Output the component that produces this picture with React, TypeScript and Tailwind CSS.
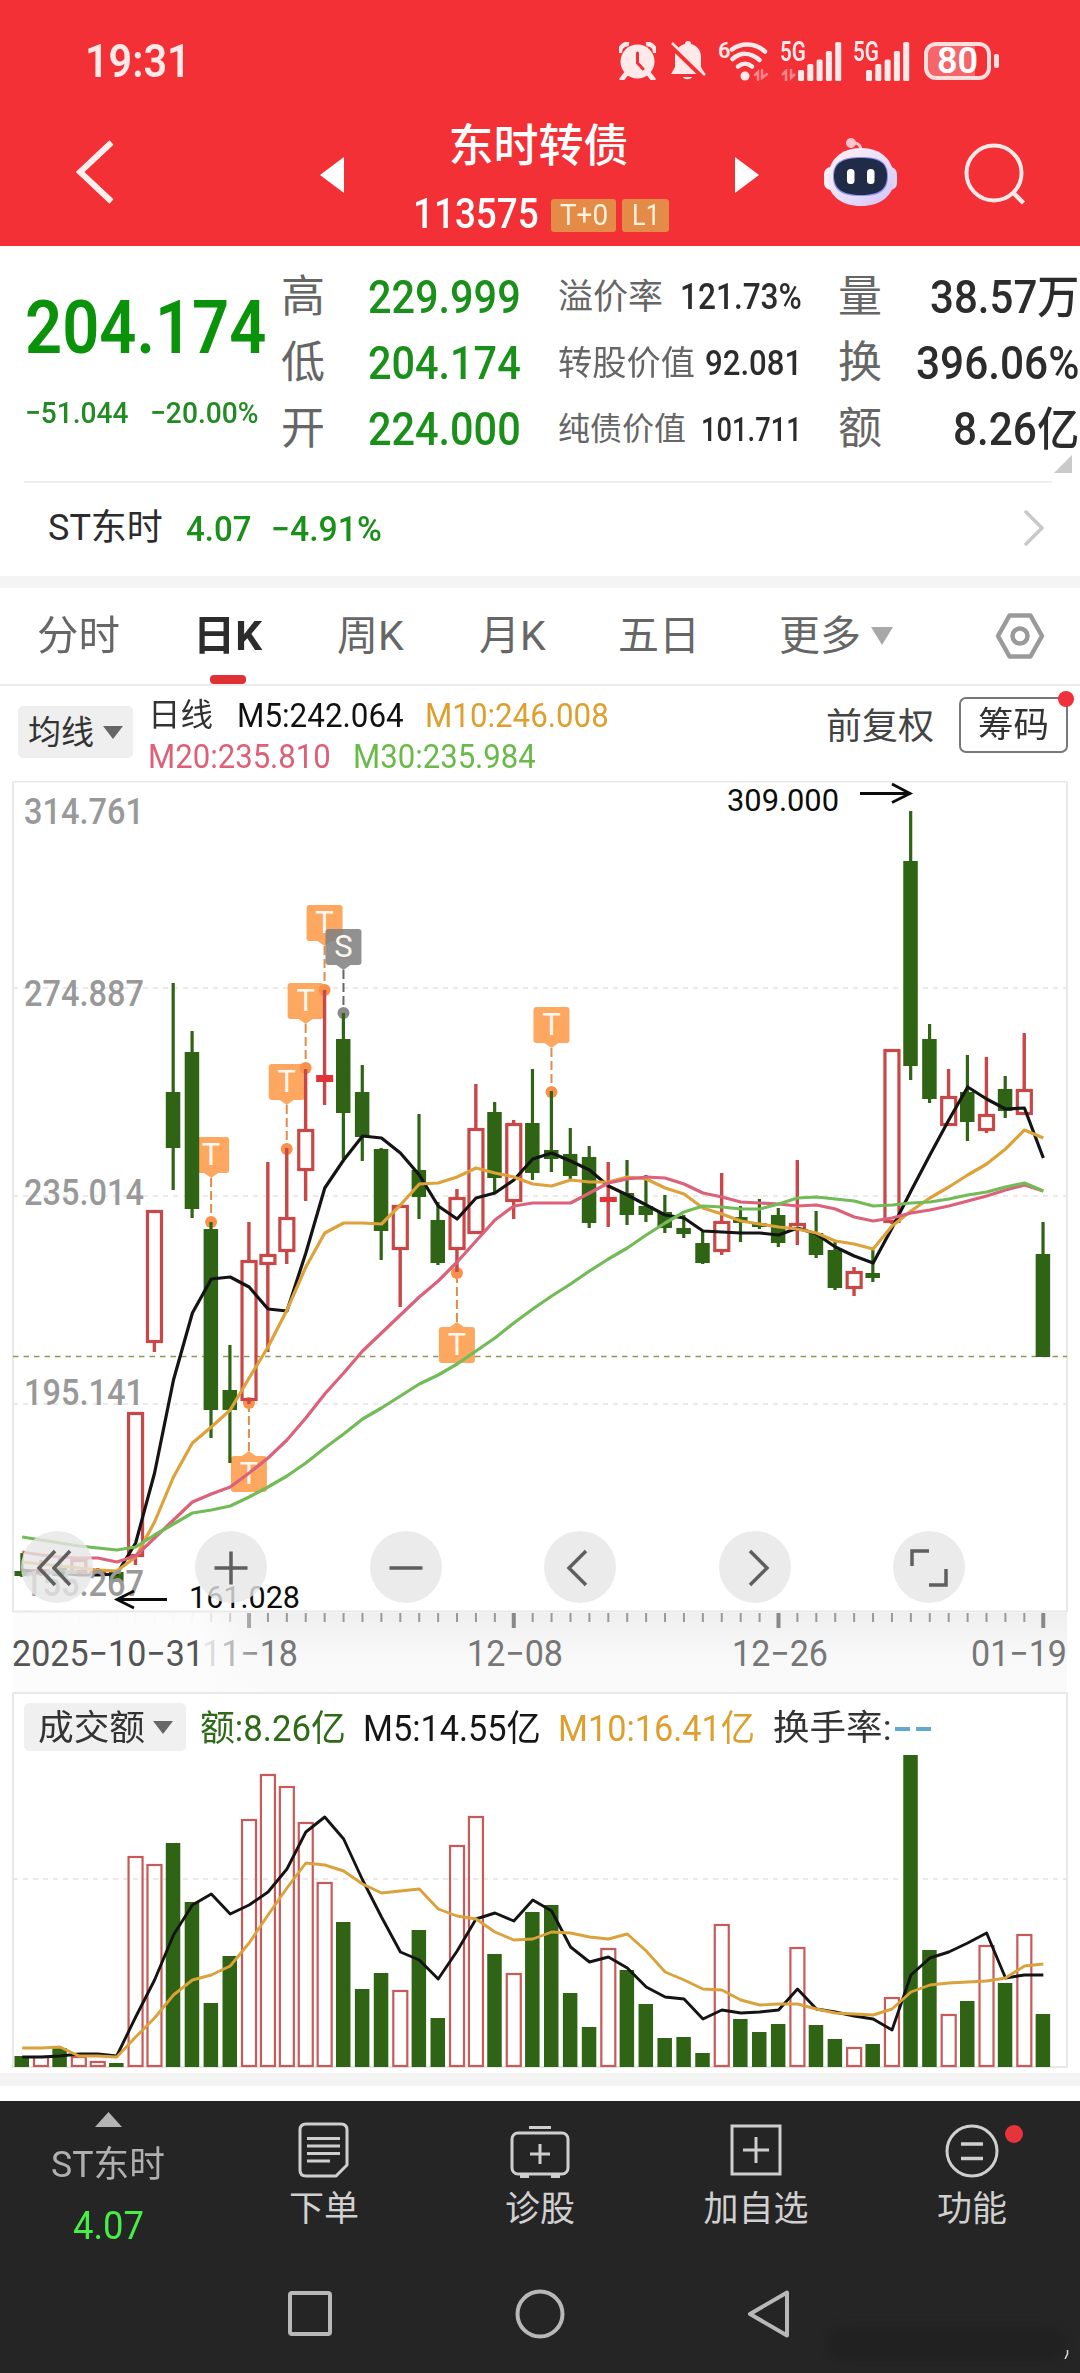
import { useLayoutEffect, useRef, useState } from 'react'
import type { ReactNode } from 'react'

type Dir = 'up' | 'down'
// direction, high, body top, body bottom, low
type Candle = [Dir, number, number, number, number]

const GREEN = '#2e6414'
const RED = '#c94747'
const ORANGE = '#fda55b'

const colX = (i: number) => 21.6 + 18.91 * i

const candles: Candle[] = [
  ['down', 1553, 1571, 1576, 1577],
  ['up', 1560, 1569, 1575, 1576],
  ['down', 1558, 1568, 1576, 1577],
  ['up', 1558, 1559, 1573, 1574],
  ['up', 1568, 1571, 1574, 1575],
  ['down', 1571, 1572, 1582, 1582],
  ['up', 1412, 1412, 1557, 1565],
  ['up', 1210, 1210, 1343, 1352],
  ['down', 983, 1092, 1148, 1190],
  ['down', 1031, 1052, 1209, 1218],
  ['down', 1222, 1229, 1410, 1438],
  ['down', 1345, 1390, 1410, 1463],
  ['up', 1222, 1260, 1401, 1404],
  ['up', 1162, 1254, 1265, 1352],
  ['up', 1148, 1217, 1252, 1264],
  ['up', 1069, 1129, 1171, 1201],
  ['up', 990, 1075, 1082, 1105],
  ['down', 1013, 1039, 1113, 1159],
  ['down', 1065, 1092, 1137, 1161],
  ['down', 1148, 1149, 1231, 1260],
  ['up', 1204, 1205, 1250, 1307],
  ['down', 1114, 1170, 1197, 1219],
  ['down', 1202, 1220, 1263, 1265],
  ['up', 1189, 1197, 1250, 1272],
  ['up', 1084, 1128, 1234, 1234],
  ['down', 1102, 1112, 1178, 1192],
  ['up', 1120, 1123, 1202, 1219],
  ['down', 1069, 1123, 1173, 1180],
  ['down', 1091, 1150, 1159, 1172],
  ['down', 1128, 1154, 1176, 1180],
  ['down', 1146, 1157, 1223, 1228],
  ['up', 1162, 1197, 1202, 1227],
  ['down', 1160, 1193, 1215, 1225],
  ['down', 1175, 1206, 1215, 1222],
  ['down', 1195, 1212, 1228, 1233],
  ['down', 1215, 1228, 1234, 1238],
  ['down', 1232, 1243, 1263, 1264],
  ['up', 1173, 1221, 1252, 1255],
  ['down', 1206, 1217, 1223, 1242],
  ['down', 1199, 1223, 1227, 1229],
  ['down', 1208, 1215, 1243, 1247],
  ['up', 1160, 1223, 1231, 1245],
  ['down', 1211, 1233, 1255, 1258],
  ['down', 1242, 1250, 1288, 1290],
  ['up', 1267, 1271, 1289, 1296],
  ['down', 1250, 1273, 1278, 1282],
  ['up', 1049, 1049, 1223, 1224],
  ['down', 811, 861, 1066, 1080],
  ['down', 1024, 1039, 1099, 1103],
  ['up', 1069, 1096, 1126, 1126],
  ['down', 1055, 1092, 1122, 1141],
  ['up', 1057, 1114, 1131, 1133],
  ['down', 1076, 1089, 1111, 1118],
  ['up', 1033, 1089, 1115, 1115],
  ['down', 1222, 1254, 1357, 1357],
]

const ma5 = [
  1570, 1572, 1573, 1575, 1575, 1574, 1543, 1473, 1380, 1313, 1279, 1277, 1287, 1309, 1311, 1253, 1188, 1160, 1136,
  1138, 1153, 1175, 1206, 1219, 1198, 1193, 1180, 1159, 1153, 1161, 1170, 1186, 1195, 1205, 1215, 1218, 1231, 1232,
  1233, 1233, 1235, 1228, 1234, 1247, 1256, 1263, 1228, 1191, 1155, 1120, 1087, 1099, 1109, 1108, 1158,
]
const ma10 = [
  1562, 1564, 1566, 1568, 1570, 1571, 1557, 1522, 1477, 1443, 1427, 1410, 1378, 1347, 1310, 1267, 1233, 1223, 1223,
  1224, 1205, 1184, 1183, 1177, 1168, 1173, 1177, 1184, 1186, 1180, 1182, 1182, 1177, 1179, 1188, 1194, 1208, 1214,
  1221, 1224, 1227, 1229, 1233, 1241, 1244, 1249, 1226, 1211, 1198, 1187, 1175, 1164, 1149, 1130, 1138,
]
const ma20 = [
  1552, 1555, 1557, 1558, 1558, 1562, 1556, 1538, 1520, 1502, 1494, 1487, 1473, 1458, 1440, 1418, 1394, 1373, 1351,
  1333, 1315, 1297, 1281, 1262, 1241, 1220, 1206, 1203, 1203, 1203, 1193, 1183, 1179, 1177, 1178, 1184, 1193, 1197,
  1202, 1203, 1204, 1206, 1205, 1209, 1217, 1221, 1218, 1213, 1210, 1206, 1201, 1196, 1190, 1185, 1191,
]
const ma30 = [
  1537, 1540, 1543, 1546, 1548, 1550, 1547, 1535, 1524, 1513, 1510, 1506, 1497, 1487, 1476, 1463, 1448, 1434, 1419,
  1408, 1396, 1384, 1375, 1364, 1351, 1338, 1323, 1309, 1296, 1284, 1271, 1259, 1248, 1235, 1223, 1212, 1206, 1207,
  1209, 1209, 1204, 1198, 1197, 1199, 1201, 1206, 1205, 1203, 1202, 1199, 1195, 1192, 1187, 1183, 1191,
]

const volumeTops = [
  2056, 2056, 2048, 2056, 2061, 2063, 1856, 1864, 1843, 1902, 2003, 1956, 1819, 1774, 1786, 1822, 1882, 1922, 1989,
  1973, 1990, 1930, 2018, 1845, 1816, 1954, 1973, 1912, 1905, 1993, 2027, 1948, 1970, 2004, 2038, 2037, 2053, 1924,
  2019, 2032, 2024, 1947, 2025, 2039, 2047, 2044, 1997, 1755, 1950, 2014, 2001, 1945, 1983, 1934, 2014,
]
const volMa5 = [
  2057, 2057, 2056, 2054, 2054, 2056, 2017, 1980, 1935, 1905, 1894, 1914, 1905, 1892, 1869, 1832, 1817, 1839, 1880,
  1917, 1952, 1960, 1979, 1951, 1919, 1913, 1921, 1900, 1911, 1947, 1962, 1957, 1968, 1987, 1997, 1999, 2019, 2010,
  2013, 2012, 2010, 1989, 2009, 2012, 2016, 2019, 2030, 1975, 1958, 1952, 1943, 1933, 1978, 1975, 1975,
]
const volMa10 = [
  2048, 2048, 2047, 2056, 2056, 2057, 2037, 2018, 1995, 1980, 1975, 1966, 1943, 1915, 1888, 1863, 1865, 1871, 1884,
  1893, 1891, 1889, 1909, 1916, 1919, 1932, 1940, 1939, 1932, 1933, 1937, 1939, 1934, 1951, 1972, 1980, 1989, 1990,
  2000, 2005, 2004, 2004, 2009, 2013, 2014, 2015, 2009, 1992, 1985, 1983, 1982, 1981, 1978, 1966, 1964,
]

// column, badge top, dot y, letter
const markers: Array<{ i: number; top: number; dot: number; letter: 'T' | 'S' }> = [
  { i: 10, top: 1137, dot: 1222, letter: 'T' },
  { i: 14, top: 1064, dot: 1149, letter: 'T' },
  { i: 15, top: 983, dot: 1068, letter: 'T' },
  { i: 16, top: 905, dot: 990, letter: 'T' },
  { i: 17, top: 929, dot: 1013, letter: 'S' },
  { i: 28, top: 1007, dot: 1092, letter: 'T' },
  { i: 12, top: 1456, dot: 1403, letter: 'T' },
  { i: 23, top: 1327, dot: 1273, letter: 'T' },
]

const toPoints = (values: number[]) => values.map((y, i) => `${colX(i) + 0.6},${y}`).join(' ')

// Condenses a line of text so it fills the width of its box
function Fit({ className, children }: { className: string; children: ReactNode }) {
  const inner = useRef<HTMLSpanElement>(null)
  const [scale, setScale] = useState(1)

  useLayoutEffect(() => {
    const el = inner.current
    if (el?.parentElement) {
      setScale(el.parentElement.clientWidth / el.offsetWidth)
    }
  }, [children])

  return (
    <span className={`block shrink-0 leading-none whitespace-nowrap ${className}`}>
      <span ref={inner} className="inline-block origin-left" style={{ transform: `scaleX(${scale})` }}>
        {children}
      </span>
    </span>
  )
}

function SignalBars() {
  return (
    <svg className="h-[39px] w-[44px]" viewBox="0 0 44 39" fill="currentColor">
      <rect x="0" y="28" width="6" height="11" rx="1.5" />
      <rect x="9.3" y="22" width="6" height="17" rx="1.5" />
      <rect x="18.6" y="17.500" width="6" height="21.500" rx="1.5" />
      <rect x="27.900" y="9" width="6" height="30" rx="1.5" />
      <rect x="37.200" y="0" width="6" height="39" rx="1.5" />
    </svg>
  )
}

function StatusBar() {
  return (
    <div className="flex h-[122px] items-center pl-[85px] text-[#ffe9e9]">
      <Fit className="w-[106px] text-[46px] font-semibold">19:31</Fit>
      <svg className="ml-[428px] h-[38px] w-[37px]" viewBox="0 0 37 38">
        <circle cx="18.500" cy="19.500" r="17" fill="currentColor" />
        <path d="M1 11a8 8 0 0 1 9-9M36 11a8 8 0 0 0-9-9" stroke="currentColor" strokeWidth="4.500" fill="none" />
        <path d="M7 32l-4 5M30 32l4 5" stroke="currentColor" strokeWidth="5" strokeLinecap="round" />
        <path d="M18.500 11v10l5.500 6" stroke="#f23036" strokeWidth="3" fill="none" strokeLinecap="round" />
      </svg>
      <svg className="ml-[14px] h-[40px] w-[36px]" viewBox="0 0 36 40">
        <path
          d="M18 0c2 0 3 1 3 3 6 1.500 10 6 10 13v10l4 7H1l4-7V16C5 9 9 4.500 15 3c0-2 1-3 3-3zM13 36h9c-1 3-8 3-9 0z"
          fill="currentColor"
        />
        <path d="M0 3l35 34" stroke="#f23036" strokeWidth="6" />
        <path d="M2 2l33 32" stroke="currentColor" strokeWidth="2.500" />
      </svg>
      <div className="relative ml-[12px] h-[40px] w-[52px]">
        <span className="absolute -top-px left-0 text-[22px] leading-none font-semibold">6</span>
        <svg className="h-full w-full" viewBox="0 0 52 40" fill="none" stroke="currentColor" strokeLinecap="round">
          <path d="M14 8.500c9-7 23-7 33 2" strokeWidth="4.500" />
          <path d="M14.500 18c8-7 18-7 27 1" strokeWidth="4.500" />
          <path d="M20 25.500c5-4 9-4 14 0" strokeWidth="4.500" />
          <circle cx="27" cy="35" r="4.500" fill="currentColor" stroke="none" />
          <path d="M37 34l3-3v8M44 29v8l5-4" stroke="#f98589" strokeWidth="2.500" />
        </svg>
      </div>
      <div className="relative ml-[10px] flex h-[39px] w-[62px] justify-end">
        <Fit className="absolute -top-[3px] left-0 w-[26px] text-[27px] font-semibold">5G</Fit>
        <svg className="absolute bottom-0 left-px h-[12px] w-[15px]" viewBox="0 0 15 12" fill="none">
          <path d="M1 6l4-4v10M10 0v9l4-4" stroke="#f98589" strokeWidth="2.500" />
        </svg>
        <SignalBars />
      </div>
      <div className="relative ml-[11px] flex h-[39px] w-[57px] justify-end">
        <Fit className="absolute -top-[3px] left-0 w-[26px] text-[27px] font-semibold">5G</Fit>
        <SignalBars />
      </div>
      <div className="ml-[14px] flex items-center gap-[3px]">
        <div className="relative flex h-[38px] w-[67px] items-center justify-center overflow-hidden rounded-[12px] border-[4px] border-[#ffdede] bg-[linear-gradient(90deg,#f5666b_80%,#f23036_80%)]">
          <Fit className="w-[41px] text-[36px] font-semibold text-white">80</Fit>
        </div>
        <div className="h-[14px] w-[5px] rounded-[2px] bg-[#ffdede]" />
      </div>
    </div>
  )
}

function Robot() {
  return (
    <svg className="h-[70px] w-[74px]" viewBox="0 0 74 70">
      <defs>
        <linearGradient id="shell" x1="0" y1="0" x2="1" y2="1">
          <stop offset="0" stopColor="#fff3f6" />
          <stop offset="0.6" stopColor="#e6dcfb" />
          <stop offset="1" stopColor="#cfc0f6" />
        </linearGradient>
      </defs>
      <path d="M26 5c8-1 11 2 11 8" fill="none" stroke="#ffc4cc" strokeWidth="3" />
      <circle cx="27" cy="5" r="5" fill="#ffc4cc" />
      <rect x="0" y="29" width="14" height="23" rx="7" fill="#fff0f3" />
      <rect x="59" y="29" width="14" height="23" rx="7" fill="#dcd6fa" />
      <path d="M37 10c20 0 33 12 33 31 0 17-14 27-33 27S4 58 4 41C4 22 17 10 37 10z" fill="url(#shell)" />
      <path d="M37 19c19 0 27 5 27 19 0 15-8 20-27 20S9 53 9 38c0-14 9-19 28-19z" fill="#8d8ff0" />
      <path d="M37 20c18 0 26 5 26 18S55 57 37 57 10 51 10 38s9-18 27-18z" fill="#202b48" />
      <rect x="23" y="31" width="7.500" height="15" rx="3.500" fill="#fff" />
      <rect x="43" y="31" width="7.500" height="15" rx="3.500" fill="#fff" />
    </svg>
  )
}

function Header() {
  return (
    <header className="h-[246px] bg-[#f23036] text-white">
      <StatusBar />
      <div className="flex h-[124px] items-start">
        <svg className="mt-[18px] ml-[76px] h-[64px] w-[38px]" viewBox="0 0 38 64" fill="none">
          <path d="M35.500 2.500L4 32l31.500 29.500" stroke="#fff0ee" strokeWidth="6" />
        </svg>
        <svg className="mt-[35px] ml-[206px] h-[36px] w-[24px]" viewBox="0 0 24 36" fill="#fff">
          <path d="M24 0v36L0 18z" />
        </svg>
        <div className="ml-[69px] flex w-[256px] flex-col items-center">
          <h1 className="mt-[2px] -ml-[5px] text-[45px] leading-[45px] font-medium">东时转债</h1>
          <div className="mt-[25px] flex items-center">
            <Fit className="w-[126px] -translate-y-[2px] text-[43px] font-medium">113575</Fit>
            <span className="ml-[12px] flex h-[33px] w-[65px] items-center justify-center rounded-[3px] bg-[#e48b48] text-[#fff3df]">
              <Fit className="w-[48px] text-[29px]">T+0</Fit>
            </span>
            <span className="ml-[6px] flex h-[33px] w-[47px] items-center justify-center rounded-[3px] bg-[#e48b48] text-[#fff3df]">
              <Fit className="w-[28px] text-[29px]">L1</Fit>
            </span>
          </div>
        </div>
        <svg className="mt-[35px] ml-[66px] h-[36px] w-[24px]" viewBox="0 0 24 36" fill="#fff">
          <path d="M0 0v36l24-18z" />
        </svg>
        <div className="mt-[16px] ml-[65px]">
          <Robot />
        </div>
        <svg className="mt-[21px] ml-[66px] h-[62px] w-[62px]" viewBox="0 0 62 62" fill="none" stroke="#ffe8e8">
          <circle cx="30" cy="30" r="27.500" strokeWidth="4" />
          <path d="M48.500 49l11 11" strokeWidth="4.500" />
        </svg>
      </div>
    </header>
  )
}

function QuotePanel() {
  return (
    <section className="relative h-[235px] text-[#2c2c2c]">
      <div className="flex pt-[18px]">
        <div className="ml-[25px] w-[256px] text-[#0a930a]">
          <Fit className="mt-[26px] w-[241px] text-[75px] font-semibold">204.174</Fit>
          <div className="mt-[33px] flex text-[30px] font-medium text-[#238b23]">
            <Fit className="w-[103px]">−51.044</Fit>
            <Fit className="ml-[22px] w-[109px]">−20.00%</Fit>
          </div>
        </div>
        <div className="flex w-[44px] flex-col text-[44px] text-[#666]">
          <span className="h-[66px] leading-[66px]">高</span>
          <span className="h-[66px] leading-[66px]">低</span>
          <span className="h-[66px] leading-[66px]">开</span>
        </div>
        <div className="ml-[43px] flex w-[153px] flex-col text-[46px] font-medium text-[#1a8f1a]">
          <div className="flex h-[66px] items-center">
            <Fit className="w-[153px]">229.999</Fit>
          </div>
          <div className="flex h-[66px] items-center">
            <Fit className="w-[153px]">204.174</Fit>
          </div>
          <div className="flex h-[66px] items-center">
            <Fit className="w-[153px]">224.000</Fit>
          </div>
        </div>
        <div className="ml-[37px] flex w-[244px] flex-col font-medium">
          <div className="flex h-[66px] items-center justify-between">
            <Fit className="w-[105px] text-[35px] font-normal text-[#666]">溢价率</Fit>
            <Fit className="w-[122px] text-[36px]">121.73%</Fit>
          </div>
          <div className="flex h-[66px] items-center justify-between">
            <Fit className="w-[137px] text-[34px] font-normal text-[#666]">转股价值</Fit>
            <Fit className="w-[97px] text-[35px]">92.081</Fit>
          </div>
          <div className="flex h-[66px] items-center justify-between">
            <Fit className="w-[128px] text-[32px] font-normal text-[#666]">纯债价值</Fit>
            <Fit className="w-[101px] text-[33px]">101.711</Fit>
          </div>
        </div>
        <div className="ml-[36px] flex w-[241px] flex-col text-[46px] font-medium">
          <div className="flex h-[66px] items-center justify-between">
            <span className="text-[44px] leading-none font-normal text-[#666]">量</span>
            <Fit className="w-[149px]">38.57万</Fit>
          </div>
          <div className="flex h-[66px] items-center justify-between">
            <span className="text-[44px] leading-none font-normal text-[#666]">换</span>
            <Fit className="w-[163px]">396.06%</Fit>
          </div>
          <div className="flex h-[66px] items-center justify-between">
            <span className="text-[44px] leading-none font-normal text-[#666]">额</span>
            <Fit className="w-[126px]">8.26亿</Fit>
          </div>
        </div>
      </div>
      <svg className="absolute right-[8px] bottom-[8px] h-[18px] w-[18px]" viewBox="0 0 18 18" fill="#cacaca">
        <path d="M18 0v18H0z" />
      </svg>
    </section>
  )
}

function RelatedStock() {
  return (
    <section className="mr-[28px] ml-[24px] flex h-[95px] items-center border-t-2 border-[#efefef] pb-[3px] pl-[24px] text-[#1a8f1a]">
      <Fit className="w-[115px] text-[36px] text-[#2c2c2c]">ST东时</Fit>
      <Fit className="ml-[23px] w-[65px] pt-[2px] text-[35px] font-medium">4.07</Fit>
      <Fit className="ml-[20px] w-[111px] pt-[2px] text-[35px] font-medium">−4.91%</Fit>
      <svg className="mr-[8px] ml-auto h-[36px] w-[20px]" viewBox="0 0 20 36" fill="none">
        <path d="M2 2l16 16L2 34" stroke="#c8c8c8" strokeWidth="3.500" strokeLinecap="round" />
      </svg>
    </section>
  )
}

function PeriodTabs() {
  return (
    <nav className="relative flex h-[98px] items-center border-b-2 border-[#ececec] pl-[37px] text-[41px] leading-none text-[#666]">
      <Fit className="w-[83px]">分时</Fit>
      <Fit className="ml-[73px] w-[69px] font-bold text-[#2c2c2c]">日K</Fit>
      <Fit className="ml-[75px] w-[67px]">周K</Fit>
      <Fit className="ml-[75px] w-[67px]">月K</Fit>
      <Fit className="ml-[72px] w-[82px]">五日</Fit>
      <Fit className="ml-[79px] w-[82px]">更多</Fit>
      <svg className="ml-[10px] h-[18px] w-[22px]" viewBox="0 0 22 18" fill="#a8a8a8">
        <path d="M0 0h22L11 18z" />
      </svg>
      <svg className="mr-[35px] ml-auto h-[46px] w-[50px]" viewBox="0 0 50 46" fill="none" stroke="#9a9a9a">
        <path d="M14.500 2.500h21L47 23 35.500 43.500h-21L3 23z" strokeWidth="4.500" strokeLinejoin="round" />
        <circle cx="25" cy="23" r="7.500" strokeWidth="4.500" />
      </svg>
      <span className="absolute bottom-0 left-[210px] h-[9px] w-[36px] rounded-[4px] bg-[#e03033]" />
    </nav>
  )
}

function DownArrow() {
  return (
    <svg className="h-[13px] w-[20px]" viewBox="0 0 20 13" fill="#666">
      <path d="M0 0h20L10 13z" />
    </svg>
  )
}

function AverageLegend() {
  return (
    <div className="flex h-[95px] pl-[18px]">
      <button
        type="button"
        className="mt-[20px] flex h-[52px] w-[115px] items-center justify-center gap-[9px] rounded-[5px] bg-[#efefef]"
      >
        <Fit className="w-[66px] text-[33px] text-[#333]">均线</Fit>
        <DownArrow />
      </button>
      <div className="ml-[15px] flex flex-col text-[34px]">
        <div className="mt-[11px] flex h-[35px] items-center">
          <Fit className="w-[65px] text-[32px] text-[#333]">日线</Fit>
          <Fit className="ml-[24px] w-[167px] text-[#111]">M5:242.064</Fit>
          <Fit className="ml-[21px] w-[184px] text-[#dda02f]">M10:246.008</Fit>
        </div>
        <div className="mt-[6px] flex h-[35px] items-center">
          <Fit className="w-[183px] text-[#dd6076]">M20:235.810</Fit>
          <Fit className="ml-[22px] w-[183px] text-[#6aba49]">M30:235.984</Fit>
        </div>
      </div>
      <span className="mt-[23px] mr-[25px] ml-auto text-[36px] leading-none text-[#444]">前复权</span>
      <button
        type="button"
        className="relative mt-[11px] mr-[12px] flex h-[56px] w-[109px] items-center justify-center rounded-[7px] border-2 border-[#777] text-[#333]"
      >
        <Fit className="w-[71px] text-[35px]">筹码</Fit>
        <span className="absolute -top-[8px] -right-[8px] h-[16px] w-[16px] rounded-full bg-[#f0303a]" />
      </button>
    </div>
  )
}

function Marker({ i, top, dot, letter }: { i: number; top: number; dot: number; letter: 'T' | 'S' }) {
  const x = colX(i) + 0.4
  const above = top < dot
  const fill = letter === 'S' ? '#828282' : ORANGE
  const tip = above ? top + 41 : top - 5
  const edge = above ? top + 36 : top
  return (
    <g>
      <line
        x1={x}
        x2={x}
        y1={tip}
        y2={dot}
        stroke={letter === 'S' ? '#666' : '#e08d4c'}
        strokeWidth="2"
        strokeDasharray="9 4"
      />
      <circle cx={x} cy={dot} r="6" fill={letter === 'S' ? '#8a8a8a' : '#f9914a'} />
      <g opacity={letter === 'S' ? 0.88 : 0.97}>
        <rect x={x - 18} y={top} width="36" height="36" rx="3" fill={fill} />
        <path d={`M${x - 7} ${edge}L${x} ${tip}L${x + 7} ${edge}z`} fill={fill} />
      </g>
      <text x={x} y={top + 28} textAnchor="middle" fontSize="31" fill="#fff8ee">
        {letter}
      </text>
    </g>
  )
}

function CandleStick({ candle, i }: { candle: Candle; i: number }) {
  const [dir, high, top, bottom, low] = candle
  const x = colX(i)
  if (dir === 'down') {
    return (
      <g fill={GREEN}>
        <rect x={x - 1.3} y={high} width="3.200" height={low - high} />
        <rect x={x - 7.1} y={top} width="14.500" height={bottom - top} />
      </g>
    )
  }
  const solid = bottom - top < 8
  return (
    <g fill={RED}>
      <rect x={x - 1.3} y={high} width="3.400" height={top - high} />
      <rect x={x - 1.3} y={bottom} width="3.400" height={low - bottom} />
      {solid ? (
        <rect x={x - 8} y={top} width="17" height={bottom - top} fill="#e23338" />
      ) : (
        <rect x={x - 6.5} y={top + 1.5} width="14" height={bottom - top - 3} fill="none" stroke={RED} strokeWidth="3.200" />
      )}
    </g>
  )
}

const priceLabels: Array<[string, number]> = [
  ['314.761', 824],
  ['274.887', 1006],
  ['235.014', 1205],
  ['195.141', 1405],
  ['155.267', 1596],
]

const chartActions: Array<{ key: string; path: string }> = [
  { key: 'first', path: 'M34 20L18 37l16 17M49 20L33 37l16 17' },
  { key: 'zoomIn', path: 'M19.500 37h33M36 20.500v33' },
  { key: 'zoomOut', path: 'M19.500 37h33' },
  { key: 'prev', path: 'M42 20L25 37l17 17' },
  { key: 'next', path: 'M31 20l17 17-17 17' },
  { key: 'expand', path: 'M19 35V20h17M53 38v16H36' },
]

function PriceChart() {
  return (
    <div className="relative h-[832px]">
      <svg className="block h-[832px] w-[1080px]" viewBox="0 781 1080 832" fontFamily="Roboto">
        <rect x="13" y="781.500" width="1054" height="830" fill="none" stroke="#e8e8e8" strokeWidth="2" />
        {[988, 1196, 1404].map((y) => (
          <line key={y} x1="13" x2="1067" y1={y} y2={y} stroke="#e4e4e4" strokeWidth="1.500" strokeDasharray="5 5" />
        ))}
        <line x1="13" x2="1067" y1="1356.500" y2="1356.500" stroke="#8c9a50" strokeWidth="1.500" strokeDasharray="5.500 5" />
        {markers.map((m) => (
          <Marker key={m.i} {...m} />
        ))}
        {candles.map((candle, i) => (
          <CandleStick key={i} candle={candle} i={i} />
        ))}
        <g fill="none" strokeWidth="3.200" strokeLinejoin="round">
          <polyline points={toPoints(ma5)} stroke="#141414" />
          <polyline points={toPoints(ma10)} stroke="#dda239" />
          <polyline points={toPoints(ma20)} stroke="#dc617a" />
          <polyline points={toPoints(ma30)} stroke="#72bb56" />
        </g>
        <g fontSize="36" fontWeight="500" fill="#999">
          {priceLabels.map(([label, y]) => (
            <text key={label} x="24" y={y} textLength="120" lengthAdjust="spacingAndGlyphs">
              {label}
            </text>
          ))}
        </g>
        <g fontSize="32" fill="#0c0c0c">
          <text x="727" y="811" textLength="112" lengthAdjust="spacingAndGlyphs">
            309.000
          </text>
          <text x="189" y="1608" textLength="111" lengthAdjust="spacingAndGlyphs">
            161.028
          </text>
        </g>
        <path
          d="M860 793.500h50M892 784l18 9.500-18 9M167 1599.500h-50M134 1591l-17 8.500 17 8.500"
          fill="none"
          stroke="#0c0c0c"
          strokeWidth="2.800"
        />
      </svg>
      <div className="absolute bottom-[10px] left-[21px] flex gap-[102.4px]">
        {chartActions.map(({ key, path }) => (
          <button key={key} type="button" className="h-[72px] w-[72px] rounded-full bg-[#e6e6e6]/80">
            <svg viewBox="0 0 72 72" fill="none" stroke="#5f5f5f" strokeWidth="3.500">
              <path d={path} />
            </svg>
          </button>
        ))}
      </div>
    </div>
  )
}

const dates: Array<[string, number]> = [
  ['11-18', 202],
  ['12-08', 467],
  ['12-26', 732],
  ['01-19', 971],
]

function DateAxis() {
  return (
    <svg className="block h-[79px] w-[1080px]" viewBox="0 1613 1080 79" fontFamily="Roboto">
      <defs>
        <linearGradient id="strip" x1="0" y1="0" x2="0" y2="1">
          <stop offset="0" stopColor="#efefef" />
          <stop offset="0.6" stopColor="#f9f9f9" />
          <stop offset="1" stopColor="#fafafa" />
        </linearGradient>
        <linearGradient id="fade" x1="0" y1="0" x2="1" y2="0">
          <stop offset="0" stopColor="#fcfcfc" />
          <stop offset="0.72" stopColor="#fcfcfc" stopOpacity="0.95" />
          <stop offset="1" stopColor="#fcfcfc" stopOpacity="0" />
        </linearGradient>
      </defs>
      <rect x="13" y="1613" width="1054" height="79" fill="url(#strip)" />
      {candles.map((_, i) => {
        const major = (i - 12) % 14 === 0
        return (
          <rect
            key={i}
            x={colX(i) - (major ? 1.5 : 0.5)}
            y="1613"
            width={major ? 4 : 2}
            height={major ? 15 : 9}
            fill={major ? '#888' : '#999'}
          />
        )
      })}
      <g fontSize="36" fill="#777">
        {dates.map(([label, x]) => (
          <text key={label} x={x} y="1666" textLength="96" lengthAdjust="spacingAndGlyphs">
            {label.replace('-', '−')}
          </text>
        ))}
      </g>
      <rect x="13" y="1613" width="257" height="79" fill="url(#fade)" />
      <text x="12" y="1666" fontSize="36" fill="#555" textLength="192" lengthAdjust="spacingAndGlyphs">
        2025−10−31
      </text>
    </svg>
  )
}

function VolumeChart() {
  const base = 2067
  return (
    <section className="relative h-[381px]">
      <svg className="block h-[381px] w-[1080px]" viewBox="0 1692 1080 381">
        <rect x="13" y="1693" width="1054" height="374" fill="none" stroke="#e8e8e8" strokeWidth="2" />
        <line x1="13" x2="1067" y1="1879" y2="1879" stroke="#e4e4e4" strokeWidth="1.500" strokeDasharray="5 5" />
        {volumeTops.map((top, i) =>
          candles[i][0] === 'down' ? (
            <rect key={i} x={colX(i) - 7.1} y={top} width="14.500" height={base - top} fill={GREEN} />
          ) : (
            <rect
              key={i}
              x={colX(i) - 6.5}
              y={top + 1}
              width="14"
              height={base - top - 2}
              fill="none"
              stroke="#c85a5a"
              strokeWidth="2.200"
            />
          ),
        )}
        <g fill="none" strokeWidth="2.900" strokeLinejoin="round">
          <polyline points={toPoints(volMa5)} stroke="#141414" />
          <polyline points={toPoints(volMa10)} stroke="#dba23c" />
        </g>
      </svg>
      <div className="absolute top-[11px] left-[24px] flex h-[48px] items-center text-[36px]">
        <button
          type="button"
          className="flex h-[48px] w-[162px] items-center justify-center gap-[9px] rounded-[5px] bg-[#f0f0f0]"
        >
          <Fit className="w-[107px] pt-[2px] text-[35px] text-[#333]">成交额</Fit>
          <DownArrow />
        </button>
        <Fit className="ml-[14px] w-[146px] pt-[3px] text-[#2e6a18]">额:8.26亿</Fit>
        <Fit className="ml-[17px] w-[178px] pt-[3px] text-[#161616]">M5:14.55亿</Fit>
        <Fit className="ml-[17px] w-[197px] pt-[3px] text-[#dda02f]">M10:16.41亿</Fit>
        <Fit className="ml-[18px] w-[118px] pt-[3px] text-[35px] text-[#333]">换手率:</Fit>
        <span className="ml-[4px] flex gap-[6px] pt-[3px]">
          <i className="h-[4px] w-[15px] bg-[#62a9d0]" />
          <i className="h-[4px] w-[15px] bg-[#62a9d0]" />
        </span>
      </div>
    </section>
  )
}

function ActionBar() {
  return (
    <div className="grid h-[140px] grid-cols-5 text-center text-[35px] leading-none text-[#d0d0d0]">
      <div className="flex flex-col items-center text-[#b0b0b0]">
        <svg className="mt-[11px] h-[15px] w-[27px]" viewBox="0 0 27 15" fill="#b4b4b4">
          <path d="M13.500 0L27 15H0z" />
        </svg>
        <Fit className="mt-[20px] w-[114px] text-[36px]">ST东时</Fit>
        <Fit className="mt-[24px] w-[71px] text-[38px] text-[#46ee46]">4.07</Fit>
      </div>
      <div className="flex flex-col items-center">
        <svg className="mt-[21px] h-[57px] w-[52px]" viewBox="0 0 52 57" fill="none" stroke="#cfcfcf" strokeWidth="3">
          <path d="M8 2h35q6 0 6 6v35L38 54H8q-6 0-6-6V8q0-6 6-6z" />
          <path d="M9 16.500h33M9 24h33M9 31.500h33M9 39h23" />
        </svg>
        <span className="mt-[13px]">下单</span>
      </div>
      <div className="flex flex-col items-center">
        <svg className="mt-[23px] h-[55px] w-[60px]" viewBox="0 0 60 55" fill="none" stroke="#cfcfcf" strokeWidth="3">
          <rect x="2" y="9" width="56" height="41" rx="6" />
          <path d="M19 3.500h22M20 30h20M30 20v20" />
          <path d="M10 52h9M41 52h9" strokeWidth="4" />
        </svg>
        <span className="mt-[13px]">诊股</span>
      </div>
      <div className="flex flex-col items-center">
        <svg className="mt-[23px] h-[52px] w-[52px]" viewBox="0 0 52 52" fill="none" stroke="#cfcfcf" strokeWidth="3">
          <rect x="2" y="2" width="48" height="48" />
          <path d="M13 26h26M26 13v26" />
        </svg>
        <span className="mt-[16px]">加自选</span>
      </div>
      <div className="flex flex-col items-center">
        <div className="relative mt-[23px]">
          <svg className="block h-[54px] w-[54px]" viewBox="0 0 54 54" fill="none" stroke="#cfcfcf" strokeWidth="3">
            <circle cx="27" cy="27" r="25" />
            <path d="M16 20h22M16 34.500h22" strokeWidth="3.500" />
          </svg>
          <span className="absolute top-px -right-[24px] h-[18px] w-[18px] rounded-full bg-[#e5343b]" />
        </div>
        <span className="mt-[14px]">功能</span>
      </div>
    </div>
  )
}

function SystemNav() {
  return (
    <div className="relative flex h-[132px] items-start pt-[47px]">
      <svg className="ml-[287px] h-[50px] w-[46px]" viewBox="0 0 46 50" fill="none" stroke="#b8b8b8" strokeWidth="4">
        <rect x="3" y="5" width="40" height="41" rx="2" />
      </svg>
      <svg className="ml-[181px] h-[52px] w-[52px]" viewBox="0 0 52 52" fill="none" stroke="#b8b8b8" strokeWidth="4">
        <circle cx="26" cy="26" r="22.500" />
      </svg>
      <svg className="ml-[180px] h-[52px] w-[46px]" viewBox="0 0 46 52" fill="none" stroke="#b8b8b8" strokeWidth="4">
        <path d="M41 4.500v43L4 26z" strokeLinejoin="round" />
      </svg>
      <span className="absolute right-[16px] bottom-[12px] h-[34px] w-[236px] rounded-full bg-[#212121] blur-[5px]" />
      <svg className="absolute right-[11px] bottom-[14px] h-[9px] w-[5px]" viewBox="0 0 5 9" fill="none">
        <path d="M3.500 0v4L1 9" stroke="#ddd" strokeWidth="1.500" />
      </svg>
    </div>
  )
}

export default function App() {
  return (
    <main className="h-[2373px] w-[1080px] overflow-hidden bg-white font-[Roboto,'Noto_Sans_CJK_SC',sans-serif]">
      <Header />
      <QuotePanel />
      <RelatedStock />
      <div className="h-[12px] bg-[#f4f4f4]" />
      <PeriodTabs />
      <AverageLegend />
      <PriceChart />
      <DateAxis />
      <VolumeChart />
      <div className="mb-[15px] h-[13px] bg-[#f4f4f4]" />
      <footer className="bg-[#252525]">
        <ActionBar />
        <SystemNav />
      </footer>
    </main>
  )
}
